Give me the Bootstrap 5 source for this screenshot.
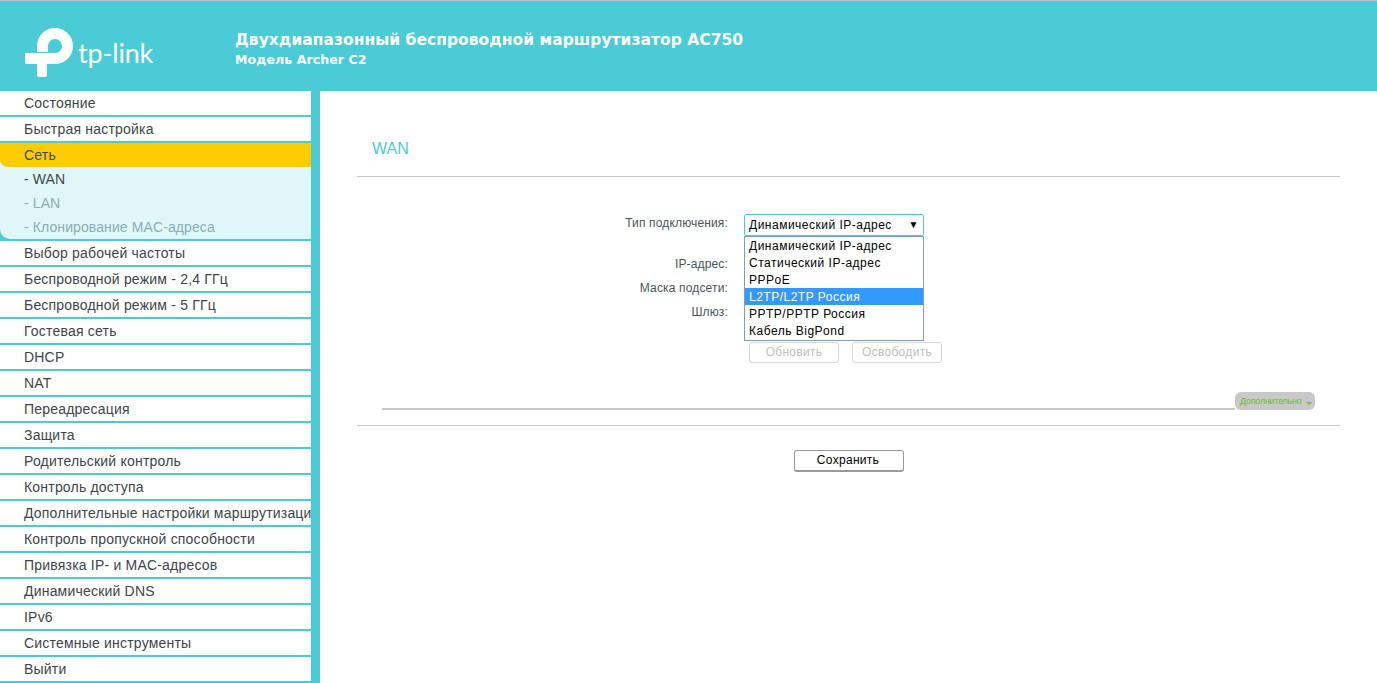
<!DOCTYPE html>
<html lang="ru">
<head>
<meta charset="utf-8">
<title>TP-Link</title>
<link rel="stylesheet" href="https://cdn.jsdelivr.net/npm/bootstrap@5.3.0/dist/css/bootstrap.min.css">
<style>
html,body{height:683px;overflow:hidden;background:#fff;font-family:"Liberation Sans",Arial,sans-serif;}
.shell{height:683px;}
.top-band{height:91px;background:#4acbd6;border-top:1px solid #b5c4c6;color:#fff;padding-left:25px;}
.logo-box{width:211px;padding-top:27px;}
.logo-word{font-family:Lato,sans-serif;font-weight:400;font-size:27px;letter-spacing:-.2px;line-height:1;color:#fff;margin:11px 0 0 5px;}
.title-block{padding-top:29px;margin-left:-1px;}
.title-main{font-family:"DejaVu Sans",sans-serif;font-weight:700;font-size:15.5px;line-height:21px;letter-spacing:.03px;}
.title-sub{font-family:"DejaVu Sans",sans-serif;font-weight:700;font-size:12.5px;line-height:17px;letter-spacing:.1px;}
.side{width:320px;background:#4acbd6;padding-right:9px;height:592px;}
.mitem{height:24px;line-height:24px;background:#fff;margin-bottom:2px;padding-left:24px;font-size:14px;color:#3d454a;white-space:nowrap;overflow:hidden;letter-spacing:.2px;}
.mitem-on{background:#ffcc00;margin-bottom:0;border-bottom-left-radius:8px;}
.subwrap{background:#4acbd6;margin-bottom:2px;}
.subin{background:#e0f6f8;border-bottom-left-radius:10px;}
.subitem{height:24px;line-height:24px;padding-left:24px;font-size:14px;color:#3d454a;letter-spacing:.1px;}
.subitem-off{color:#8aaeb3;}
.yellow-back{background:#e0f6f8;}
.main-pane{padding:0 37px 0 37px;}
.wan-head{height:85px;padding:47px 0 0 15px;font-size:16px;line-height:22px;color:#4acbd6;}
.rule{height:1px;background:#c8c8c8;}
.form-zone{height:248px;position:relative;}
.frow{height:24px;line-height:24px;}
.flabel{width:371px;text-align:right;font-size:12px;color:#4a5559;letter-spacing:.15px;}
.first-row{padding-top:37px;height:60px;}
.gap-row{height:15px;}
.fake-select{width:180px;height:22px;margin-left:16px;border:1px solid #4acbd6;border-radius:2px;font-size:12px;color:#000;line-height:20px;padding:0 4px;letter-spacing:.5px;}
.caret-mark{font-size:10px;}
.drop-list{position:absolute;left:387px;top:59px;width:180px;height:105px;background:#fff;border:1px solid #7f9db9;font-size:12px;line-height:18px;letter-spacing:.5px;color:#000;}
.drop-opt{height:17px;padding-left:4px;}
.drop-opt-on{background:#3399ff;color:#fff;}
.btn-row{height:21px;margin:18px 0 0 392px;gap:13px;}
.act-btn{width:90px;height:21px;padding:0;font-size:12px;line-height:19px;letter-spacing:.3px;color:#c0c0c0;background:#fff;border:1px solid #d6d6d6;border-radius:3px;}
.adv-row{padding:0 25px;height:18px;margin-top:29px;}
.adv-line{height:2px;background:#c8c8c8;flex:1;margin-top:16px;}
.adv-pill{width:80px;height:18px;background:#c8c8c8;border-radius:6px;font-size:9px;letter-spacing:-.25px;line-height:18px;color:#6cbf2e;padding-left:5px;white-space:nowrap;}
.adv-caret{display:inline-block;width:0;height:0;border:3px solid transparent;border-top-color:#6cbf2e;border-bottom:0;margin-left:4px;vertical-align:-1px;}
.save-row{padding-top:24px;}
.save-btn{width:110px;height:22px;padding:0 2px 0 0;font-size:12px;line-height:19px;letter-spacing:.3px;color:#000;background:#fff;border:1px solid #9a9a9a;border-bottom-width:2px;border-radius:3px;margin-left:437px;}
</style>
</head>
<body>
<div class="shell d-flex flex-column">
  <header class="top-band d-flex align-items-start">
    <div class="logo-box d-flex align-items-start">
      <svg width="48" height="49" viewBox="0 0 48 49" aria-hidden="true"><path fill="#fff" d="M12 24V18A18 18 0 1 1 30 36H22V47Q22 49 20 49H14Q12 49 12 47V36H2Q0 36 0 34V25H30A7 7 0 1 0 23 18V24Z"/></svg>
      <span class="logo-word">tp-link</span>
    </div>
    <div class="title-block">
      <div class="title-main">Двухдиапазонный беспроводной маршрутизатор AC750</div>
      <div class="title-sub">Модель Archer C2</div>
    </div>
  </header>
  <div class="d-flex flex-grow-1">
    <nav class="side flex-shrink-0">
      <div class="mitem">Состояние</div>
      <div class="mitem">Быстрая настройка</div>
      <div class="yellow-back"><div class="mitem mitem-on">Сеть</div></div>
      <div class="subwrap"><div class="subin">
        <div class="subitem">- WAN</div>
        <div class="subitem subitem-off">- LAN</div>
        <div class="subitem subitem-off">- Клонирование MAC-адреса</div>
      </div></div>
      <div class="mitem">Выбор рабочей частоты</div>
      <div class="mitem">Беспроводной режим - 2,4 ГГц</div>
      <div class="mitem">Беспроводной режим - 5 ГГц</div>
      <div class="mitem">Гостевая сеть</div>
      <div class="mitem">DHCP</div>
      <div class="mitem">NAT</div>
      <div class="mitem">Переадресация</div>
      <div class="mitem">Защита</div>
      <div class="mitem">Родительский контроль</div>
      <div class="mitem">Контроль доступа</div>
      <div class="mitem">Дополнительные настройки маршрутизации</div>
      <div class="mitem">Контроль пропускной способности</div>
      <div class="mitem">Привязка IP- и MAC-адресов</div>
      <div class="mitem">Динамический DNS</div>
      <div class="mitem">IPv6</div>
      <div class="mitem">Системные инструменты</div>
      <div class="mitem">Выйти</div>
    </nav>
    <main class="main-pane flex-grow-1">
      <div class="wan-head">WAN</div>
      <div class="rule"></div>
      <div class="form-zone">
        <div class="d-flex first-row"><div class="flabel">Тип подключения:</div>
          <div class="fake-select d-flex justify-content-between align-items-center"><span>Динамический IP-адрес</span><span class="caret-mark">▼</span></div></div>
        <div class="gap-row"></div>
        <div class="d-flex frow"><div class="flabel">IP-адрес:</div></div>
        <div class="d-flex frow"><div class="flabel">Маска подсети:</div></div>
        <div class="d-flex frow"><div class="flabel">Шлюз:</div></div>
        <div class="d-flex btn-row"><button class="act-btn" disabled>Обновить</button><button class="act-btn" disabled>Освободить</button></div>
        <div class="drop-list">
          <div class="drop-opt">Динамический IP-адрес</div>
          <div class="drop-opt">Статический IP-адрес</div>
          <div class="drop-opt">PPPoE</div>
          <div class="drop-opt drop-opt-on">L2TP/L2TP Россия</div>
          <div class="drop-opt">PPTP/PPTP Россия</div>
          <div class="drop-opt">Кабель BigPond</div>
        </div>
        <div class="d-flex adv-row"><div class="adv-line"></div><div class="adv-pill">Дополнительно<span class="adv-caret"></span></div></div>
      </div>
      <div class="rule"></div>
      <div class="save-row d-flex"><button class="save-btn">Сохранить</button></div>
    </main>
  </div>
</div>
<script src="https://cdn.jsdelivr.net/npm/bootstrap@5.3.0/dist/js/bootstrap.bundle.min.js"></script>
</body>
</html>
